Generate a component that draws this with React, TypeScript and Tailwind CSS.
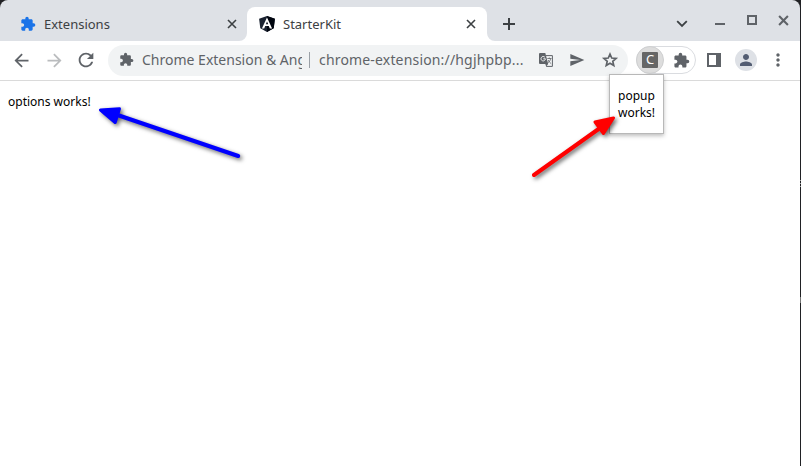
import React from "react";
import {
  MdArrowBack,
  MdArrowForward,
  MdExtension,
  MdMoreVert,
  MdPerson,
  MdRefresh,
  MdSend,
} from "react-icons/md";

function Cross({ size, width }: { size: number; width: number }) {
  return (
    <svg width={size} height={size} viewBox="0 0 10 10" fill="none" stroke="currentColor" strokeWidth={width}>
      <path d="M1 1l8 8M9 1l-8 8" />
    </svg>
  );
}

function AngularLogo() {
  return (
    <svg width="16" height="16" viewBox="0 0 16 16">
      <path d="M8 0l7.9 2.7-1.2 9.6L8 16l-6.7-3.7L.1 2.7z" fill="#1a2230" />
      <path d="M8 0l7.9 2.7-1.2 9.6L8 16z" fill="#00050f" />
      <path d="M8 1.6L2.9 12.4H5.2l1-2.3h3.6l1 2.3h2.3zM8 5.4l1.2 2.9H6.8z" fill="#fff" fillRule="evenodd" />
    </svg>
  );
}

function TranslateIcon() {
  return (
    <svg className="ml-[10px] shrink-0" width="14" height="14" viewBox="0 0 14 14" fill="none">
      <path d="M7 2.6h6.4v10.8H7.2" stroke="#5f6368" />
      <path d="M1 0h5.3l2.9 11H1a1 1 0 0 1-1-1V1a1 1 0 0 1 1-1z" fill="#5f6368" />
      <path d="M6.300 11H9.200L7.200 13.500z" fill="#5f6368" />
      <path d="M5.900 4.300a2.200 2.200 0 1 0 .5 1.500H4.300" stroke="#f1f3f4" strokeWidth="1" />
      <path d="M8.300 5.500h4.200M10.300 4.500v1M11.700 5.500c-.3 2-1.500 3.300-2.700 4.300M9.200 7c.6 1.500 1.600 2.700 3 3.700" stroke="#5f6368" strokeWidth=".8" />
    </svg>
  );
}

function StarOutline() {
  return (
    <svg className="ml-[16px] shrink-0" width="18" height="18" viewBox="0 0 24 24" fill="none" stroke="currentColor" strokeWidth="2.2">
      <path d="M12 4l2.300 5.400 5.800.5-4.400 3.800 1.350 5.700L12 16.400l-5.050 3 1.350-5.700-4.400-3.800 5.800-.5z" />
    </svg>
  );
}

function TabStrip() {
  return (
    <header className="flex h-[41px] rounded-t-[8px] bg-[#dee1e6] text-[13px] leading-[18px] text-[#3c4043]">
      <div className="flex w-[247px] items-center pt-[7px] pr-[10px] pb-0 pl-[20px]">
        <MdExtension size={16} className="text-[#1a73e8]" />
        <span className="ml-2 flex-1">Extensions</span>
        <Cross size={10} width={1.6} />
      </div>
      <div className="relative mt-[7px] flex w-[240px] items-center rounded-t-[8px] bg-white pr-[11px] pl-[12px]">
        <AngularLogo />
        <span className="ml-2 flex-1">StarterKit</span>
        <Cross size={10} width={1.6} />
        <svg className="absolute bottom-0 -left-[8px]" width="8" height="8"><path d="M8 0v8H0a8 8 0 0 0 8-8" fill="#fff" /></svg>
        <svg className="absolute -right-[8px] bottom-0" width="8" height="8"><path d="M0 0v8h8a8 8 0 0 1-8-8" fill="#fff" /></svg>
      </div>
      <svg className="mt-[18px] ml-[16px]" width="12" height="12" stroke="#3c4043" strokeWidth="2"><path d="M0 6h12M6 0v12" /></svg>
      <div className="ml-auto flex text-[#5f6368]">
        <svg className="mt-[20px]" width="12" height="8" fill="none" stroke="#3c4043" strokeWidth="1.8"><path d="M1.2 1.2L6 6l4.8-4.8" /></svg>
        <div className="mt-[23px] ml-[27px] h-[2px] w-[10px] bg-[#5f6368]" />
        <div className="mt-[15px] ml-[22px] size-[10px] border-2 border-[#5f6368]" />
        <div className="mt-[15px] mr-[11px] ml-[21px]"><Cross size={11} width={1.9} /></div>
      </div>
    </header>
  );
}

function Toolbar() {
  return (
    <div className="flex h-[40px] items-center border-b border-[#dadada] bg-white pb-[1px] text-[#5f6368]">
      <MdArrowBack size={21} className="ml-[11px]" />
      <MdArrowForward size={21} className="ml-[12px] text-[#babcbe]" />
      <MdRefresh size={22} className="ml-[10px]" />
      <div className="ml-[11px] flex h-[31px] w-[520px] items-center rounded-full bg-[#f1f3f4] text-[14px] leading-[20px]">
        <MdExtension size={15} className="ml-[11px] shrink-0 -translate-y-px" />
        <span className="ml-[8px] w-[160px] shrink-0 overflow-hidden whitespace-nowrap">Chrome Extension &amp; Ang</span>
        <span className="ml-[7px] h-[16px] w-px shrink-0 bg-[#9aa0a6]" />
        <span className="ml-[9px] w-[210px] shrink-0 tracking-[0.17px] whitespace-nowrap">chrome-extension://hgjhpbp...</span>
        <TranslateIcon />
        <MdSend size={16} className="ml-[16px] shrink-0" />
        <StarOutline />
      </div>
      <div className="ml-[8px] flex h-[28px] w-[60px] items-center rounded-full border border-[#dadce0]">
        <div className="-ml-px flex size-[28px] items-center justify-center rounded-full border border-[#cfd0d1] bg-[#dddddd]">
          <span className="flex size-[16px] items-center justify-center rounded-[1px] bg-[#666666] pb-[2px] text-[13px] leading-none text-white">C</span>
        </div>
        <MdExtension size={17} className="ml-[9px]" />
      </div>
      <div className="ml-[11px] size-[14px] border-2 border-r-[5px] border-[#5f6368]" />
      <div className="ml-[14px] flex size-[22px] items-center justify-center rounded-full bg-[#dee1e6] text-[#535d72]">
        <MdPerson size={18} />
      </div>
      <MdMoreVert size={20} className="ml-[11px]" />
    </div>
  );
}

function Popup() {
  return (
    <div className="absolute top-[74px] left-[609px] h-[60px] w-[55px] border border-[#b8b8b8] bg-white pt-[12px] pl-[8px] text-[12px] leading-[17px] text-black shadow-[0_2px_4px_rgba(0,0,0,0.25)]">
      <p>popup works!</p>
    </div>
  );
}

function Arrows() {
  return (
    <svg className="absolute top-0 left-0 drop-shadow-[2px_2px_2px_rgba(0,0,0,0.6)]" width="700" height="200" strokeLinecap="round" strokeLinejoin="round">
      <g stroke="#0000ff" fill="#0000ff">
        <path d="M116 114.5L238.2 156" strokeWidth="4" />
        <path d="M100.5 110L119.5 108.8L115.2 122.5z" strokeWidth="3" />
      </g>
      <g stroke="#ff0000" fill="#ff0000">
        <path d="M534 175L600 128" strokeWidth="4" />
        <path d="M613.5 118L595 122L603.5 133.5z" strokeWidth="3" />
      </g>
    </svg>
  );
}

export default function App() {
  return (
    <div className="relative h-[466px] w-[801px] overflow-hidden bg-[#202124] pr-px font-['Noto_Sans',sans-serif]">
      <TabStrip />
      <Toolbar />
      <main className="h-[385px] bg-white px-2 pt-[12px] text-[12px] leading-[17px] text-black">
        <p>options works!</p>
      </main>
      <div className="absolute top-[180px] right-0 flex flex-col gap-[2px]">
        <i className="h-px w-px bg-[#a0a0a0]" />
        <i className="h-px w-px bg-[#a0a0a0]" />
        <i className="h-px w-px bg-[#a0a0a0]" />
      </div>
      <div className="absolute top-[297px] right-0 h-[6px] w-px bg-[#777777]" />
      <Popup />
      <Arrows />
    </div>
  );
}
